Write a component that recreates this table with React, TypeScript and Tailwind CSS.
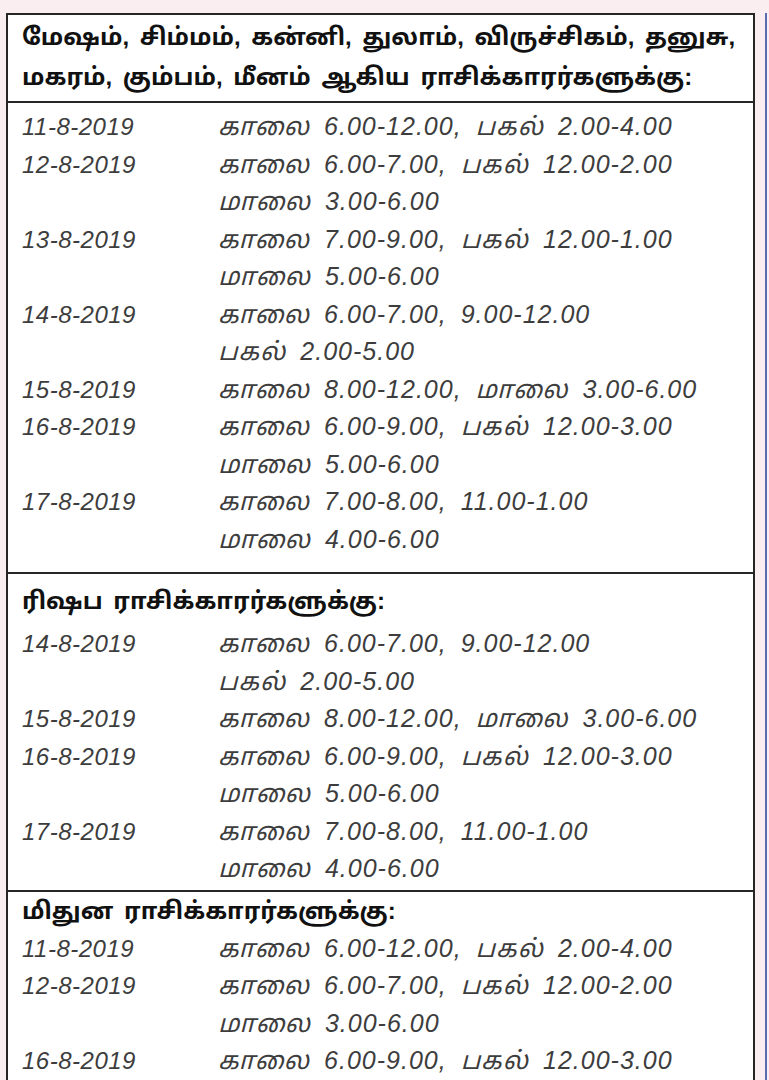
import React from "react";

type Row = { date?: string; time: string };

const sections: { title: React.ReactNode; rows: Row[]; headerClass: string; rowsClass: string }[] = [
  {
    title: (
      <>
        <div>மேஷம், சிம்மம், கன்னி, துலாம், விருச்சிகம், தனுசு,</div>
        <div>மகரம், கும்பம், மீனம் ஆகிய ராசிக்காரர்களுக்கு:</div>
      </>
    ),
    headerClass: "pt-[2px] pb-[4px] leading-[40px]",
    rowsClass: "pt-[5px] pb-[14px]",
    rows: [
      { date: "11-8-2019", time: "காலை 6.00-12.00, பகல் 2.00-4.00" },
      { date: "12-8-2019", time: "காலை 6.00-7.00, பகல் 12.00-2.00" },
      { time: "மாலை 3.00-6.00" },
      { date: "13-8-2019", time: "காலை 7.00-9.00, பகல் 12.00-1.00" },
      { time: "மாலை 5.00-6.00" },
      { date: "14-8-2019", time: "காலை 6.00-7.00, 9.00-12.00" },
      { time: "பகல் 2.00-5.00" },
      { date: "15-8-2019", time: "காலை 8.00-12.00, மாலை 3.00-6.00" },
      { date: "16-8-2019", time: "காலை 6.00-9.00, பகல் 12.00-3.00" },
      { time: "மாலை 5.00-6.00" },
      { date: "17-8-2019", time: "காலை 7.00-8.00, 11.00-1.00" },
      { time: "மாலை 4.00-6.00" },
    ],
  },
  {
    title: <div>ரிஷப ராசிக்காரர்களுக்கு:</div>,
    headerClass: "pt-[8px] pb-[2px] leading-[38px]",
    rowsClass: "pt-[3px] pb-[2px]",
    rows: [
      { date: "14-8-2019", time: "காலை 6.00-7.00, 9.00-12.00" },
      { time: "பகல் 2.00-5.00" },
      { date: "15-8-2019", time: "காலை 8.00-12.00, மாலை 3.00-6.00" },
      { date: "16-8-2019", time: "காலை 6.00-9.00, பகல் 12.00-3.00" },
      { time: "மாலை 5.00-6.00" },
      { date: "17-8-2019", time: "காலை 7.00-8.00, 11.00-1.00" },
      { time: "மாலை 4.00-6.00" },
    ],
  },
  {
    title: <div>மிதுன ராசிக்காரர்களுக்கு:</div>,
    headerClass: "pt-[0px] leading-[38px]",
    rowsClass: "pt-[0px]",
    rows: [
      { date: "11-8-2019", time: "காலை 6.00-12.00, பகல் 2.00-4.00" },
      { date: "12-8-2019", time: "காலை 6.00-7.00, பகல் 12.00-2.00" },
      { time: "மாலை 3.00-6.00" },
      { date: "16-8-2019", time: "காலை 6.00-9.00, பகல் 12.00-3.00" },
    ],
  },
];

export default function App() {
  return (
    <div className="w-[769px] h-[1080px] overflow-hidden bg-[#fbeef1] flex pl-[6px] pt-[13px] font-['Liberation_Sans','Noto_Sans_Tamil','Noto_Sans',sans-serif]">
      <div className="w-[749px] shrink-0 border-2 border-[#262626] bg-white self-start">
        {sections.map((s, i) => (
          <div key={i} className={i > 0 ? "border-t-2 border-[#262626]" : ""}>
            <div
              className={`px-[14px] text-[24px] font-bold text-[#111] [word-spacing:4px] whitespace-nowrap ${s.headerClass} ${
                i === 0 ? "border-b-2 border-[#262626]" : ""
              }`}
            >
              {s.title}
            </div>
            <div className={s.rowsClass}>
              {s.rows.map((r, j) => (
                <div key={j} className="flex items-baseline leading-[37.5px] italic text-[#3d3d3d] whitespace-nowrap">
                  <div className="w-[210px] pl-[14px] shrink-0 text-[24px] tracking-[0.5px]">{r.date}</div>
                  <div className="text-[25px] tracking-[1px] [word-spacing:6px]">{r.time}</div>
                </div>
              ))}
            </div>
          </div>
        ))}
      </div>
      <div className="w-[10px] shrink-0" />
      <div className="w-[2px] h-full bg-[#5a6bb0] shrink-0" />
      <div className="flex-1 bg-[#f7eef6]" />
    </div>
  );
}
